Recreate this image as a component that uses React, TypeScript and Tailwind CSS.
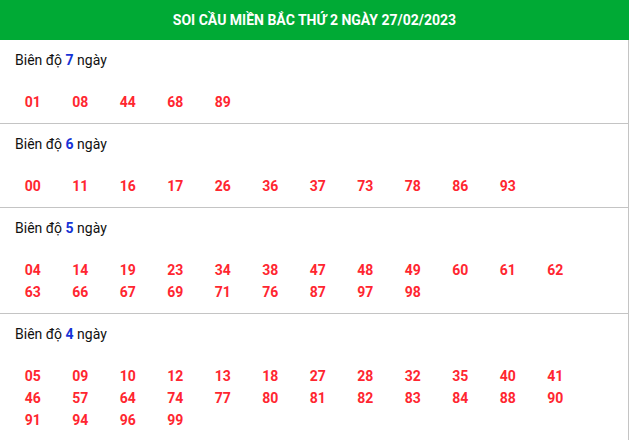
const sections: { days: number; nums: string[] }[] = [
  { days: 7, nums: ["01", "08", "44", "68", "89"] },
  { days: 6, nums: ["00", "11", "16", "17", "26", "36", "37", "73", "78", "86", "93"] },
  {
    days: 5,
    nums: ["04", "14", "19", "23", "34", "38", "47", "48", "49", "60", "61", "62", "63", "66", "67", "69", "71", "76", "87", "97", "98"],
  },
  {
    days: 4,
    nums: [
      "05", "09", "10", "12", "13", "18", "27", "28", "32", "35", "40", "41",
      "46", "57", "64", "74", "77", "80", "81", "82", "83", "84", "88", "90",
      "91", "94", "96", "99",
    ],
  },
];

export default function App() {
  return (
    <div className="w-[629px] h-[440px] overflow-hidden bg-white" style={{ fontFamily: "Roboto, 'Noto Sans', sans-serif" }}>
      <div className="h-10 bg-[#00aa35] flex items-center justify-center">
        <h1 className="text-white font-bold text-[14px]">SOI CẦU MIỀN BẮC THỨ 2 NGÀY 27/02/2023</h1>
      </div>
      <div className="border-r border-[#c4c4c4]">
        {sections.map((s) => (
          <div key={s.days} className="border-b border-[#c4c4c4] pt-[10px] pb-[10px]">
            <div className="pl-[15px] text-[14px] leading-[20px] text-[#111]">
              Biên độ <span className="font-bold text-[#1633d6]">{s.days}</span> ngày
            </div>
            <div className="mt-[21px] px-[9px] flex flex-wrap">
              {s.nums.map((n) => (
                <span key={n} className="w-[47.5px] text-center text-[14px] leading-[22px] font-bold text-[#ff2630]">
                  {n}
                </span>
              ))}
            </div>
          </div>
        ))}
      </div>
    </div>
  );
}
